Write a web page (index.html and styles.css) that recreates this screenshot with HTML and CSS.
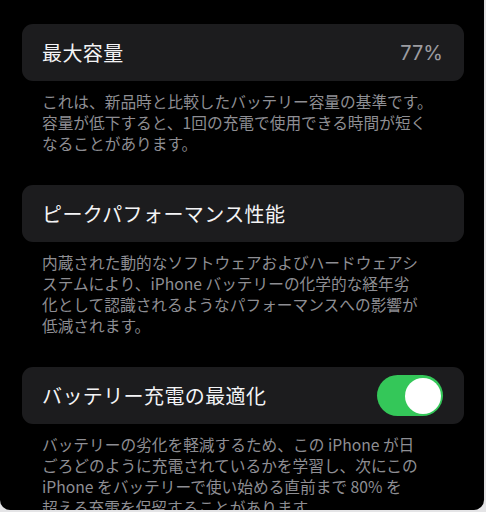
FILE: index.html
```html
<!DOCTYPE html>
<html lang="ja">
<head>
<meta charset="utf-8">
<link rel="stylesheet" href="styles.css">
</head>
<body>
<div class="screen">
  <div class="card">
    <span class="title">最大容量</span>
    <span class="value">77%</span>
  </div>
  <p class="desc">これは、新品時と比較したバッテリー容量の基準です。<br>容量が低下すると、1回の充電で使用できる時間が短く<br>なることがあります。</p>

  <div class="card">
    <span class="title">ピークパフォーマンス性能</span>
  </div>
  <p class="desc">内蔵された動的なソフトウェアおよびハードウェアシ<br>ステムにより、iPhone バッテリーの化学的な経年劣<br>化として認識されるようなパフォーマンスへの影響が<br>低減されます。</p>

  <div class="card">
    <span class="title">バッテリー充電の最適化</span>
    <span class="toggle"><span class="knob"></span></span>
  </div>
  <p class="desc">バッテリーの劣化を軽減するため、この iPhone が日<br>ごろどのように充電されているかを学習し、次にこの<br>iPhone をバッテリーで使い始める直前まで 80% を<br>超える充電を保留することがあります。</p>
</div>
</body>
</html>
```

FILE: styles.css
```css
html, body {
  margin: 0;
  padding: 0;
  background: #e4e4e6;
}
body {
  width: 486px;
  height: 512px;
  overflow: hidden;
  font-family: "Noto Sans CJK JP", "Inter", sans-serif;
}
.screen {
  width: 484px;
  height: 510px;
  background: #000;
  border-radius: 0 0 10px 10px;
  overflow: hidden;
  box-sizing: border-box;
  padding: 24px 20px 0 22px;
}
.card {
  height: 57px;
  box-sizing: border-box;
  background: #1c1c1e;
  border-radius: 11px;
  padding: 0 21px 0 20px;
  display: flex;
  align-items: center;
  justify-content: space-between;
}
.title {
  color: #f4f4f6;
  font-size: 20px;
  letter-spacing: 0.4px;
}
.value {
  color: #9c9ca1;
  font-family: "Inter", sans-serif;
  font-size: 20px;
}
.desc {
  margin: 10px 0 31px 20px;
  color: #8e8e93;
  font-size: 15.7px;
  line-height: 21px;
  white-space: nowrap;
}
.toggle {
  width: 66px;
  height: 41px;
  border-radius: 21px;
  background: #34c759;
  display: flex;
  align-items: center;
  justify-content: flex-end;
  padding: 0 2.5px;
  box-sizing: border-box;
}
.knob {
  width: 36px;
  height: 36px;
  border-radius: 50%;
  background: #fff;
}
```
